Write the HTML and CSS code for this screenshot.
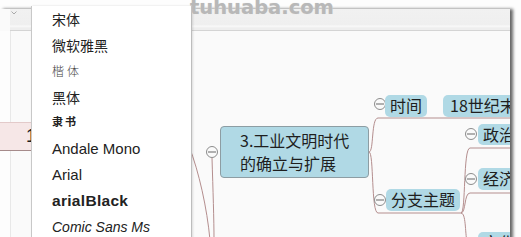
FILE: index.html
```html
<!DOCTYPE html>
<html lang="zh">
<head>
<meta charset="utf-8">
<title>字体菜单</title>
<link rel="stylesheet" href="styles.css">
</head>
<body>
<div class="screen">
  <div class="window">
    <div class="toolbar">
      <svg class="chev" width="6" height="4" viewBox="0 0 6 4"><path d="M0.5 0.5 L3 3 L5.5 0.5" fill="none" stroke="#aaa" stroke-width="1"/></svg>
    </div>
    <div class="canvas">
      <div class="gutter"></div>
      <svg class="links" width="510" height="206" viewBox="0 31 510 206">
        <g fill="none" stroke="#b48e8e" stroke-width="1">
          <path d="M189 146 C 199 172 207 208 210 240"/>
          <path d="M212 158 C 213 190 214 220 214 240"/>
          <path d="M369 152 C 374 152 371 118 378 118 L 510 118"/>
          <path d="M369 152 C 374 152 371 213 378 213 L 462 213"/>
          <path d="M461 213 C 466 213 463 148 470 148 L 510 148"/>
          <path d="M461 213 C 466 213 464 193 470 193 L 510 193"/>
          <path d="M461 213 C 466 213 465 232 467 242"/>
        </g>
        <g fill="#fafafa" stroke="#8c8c8c" stroke-width="1">
          <circle cx="212" cy="152" r="5.5"/>
          <circle cx="380" cy="104" r="5.5"/>
          <circle cx="380" cy="200" r="5.5"/>
          <circle cx="471" cy="134" r="5.5"/>
          <circle cx="471" cy="179" r="5.5"/>
        </g>
        <g stroke="#666" stroke-width="1">
          <path d="M208 152 H216"/>
          <path d="M376 104 H384"/>
          <path d="M376 200 H384"/>
          <path d="M467 134 H475"/>
          <path d="M467 179 H475"/>
        </g>
      </svg>
      <div class="node pink">1</div>
      <div class="node central">3.工业文明时代<br>的确立与扩展</div>
      <div class="node tag t-time">时间</div>
      <div class="node tag t-era">18世纪末</div>
      <div class="node tag t-branch">分支主题</div>
      <div class="node tag t-pol">政治</div>
      <div class="node tag t-eco">经济</div>
      <div class="node tag t-last">文化</div>
    </div>
  </div>
  <div class="watermark">tuhuaba.com</div>
  <ul class="font-menu">
    <li class="f-song">宋体</li>
    <li class="f-yahei">微软雅黑</li>
    <li class="f-kai">楷体</li>
    <li class="f-hei">黑体</li>
    <li class="f-li">隶书</li>
    <li class="f-latin">Andale Mono</li>
    <li class="f-latin">Arial</li>
    <li class="f-black">arialBlack</li>
    <li class="f-comic">Comic Sans Ms</li>
  </ul>
</div>
</body>
</html>
```

FILE: styles.css
```css
html, body {
  margin: 0;
  padding: 0;
  background: #ffffff;
}

.screen {
  position: relative;
  width: 521px;
  height: 237px;
  overflow: hidden;
  padding-top: 9px;
  box-sizing: border-box;
  background: #fdfdfd;
  font-family: "Noto Sans CJK SC", "Liberation Sans", sans-serif;
}

.window {
  width: 510px;
  height: 240px;
  background: #fafafa;
  box-shadow: 3px 0 3px rgba(0, 0, 0, 0.6);
}

.toolbar {
  height: 21px;
  margin-left: 10px;
  background: linear-gradient(#f1f1f1 0, #efefef 16px, #fafafa 17px, #eeeeee 19px);
  border-bottom: 1px solid #d4d4d4;
  position: relative;
}

.chev {
  position: absolute;
  left: 1px;
  top: 2px;
}

.canvas {
  position: relative;
  height: 206px;
  overflow: hidden;
}

.gutter {
  width: 10px;
  height: 100%;
  border-right: 1px solid #e8e8e8;
  background: #fdfdfd;
}

.links {
  position: absolute;
  left: 0;
  top: 0;
}

.node {
  position: absolute;
  box-sizing: border-box;
  color: #1e1e1e;
  white-space: nowrap;
}

.pink {
  left: 0;
  top: 91px;
  width: 60px;
  height: 29px;
  background: #f6e7e7;
  border-top: 1px solid #e3caca;
  border-bottom: 1px solid #a58a8a;
  padding-left: 26px;
  font-family: "Liberation Sans", sans-serif;
  font-size: 18px;
  line-height: 26px;
}

.central {
  left: 220px;
  top: 95px;
  width: 149px;
  height: 52px;
  background: #b0d9e5;
  border: 1px solid #8d9da3;
  border-radius: 4px;
  padding: 2px 0 0 19px;
  font-size: 16px;
  line-height: 23px;
}

.tag {
  height: 22px;
  background: #b0d9e5;
  border-radius: 5px;
  padding-left: 5px;
  font-size: 16px;
  line-height: 21px;
}

.t-time { left: 385px; top: 64px; width: 42px; }
.t-era { left: 443px; top: 64px; width: 80px; padding-left: 7px; }
.t-branch { left: 386px; top: 158px; width: 74px; }
.t-pol { left: 478px; top: 93px; width: 50px; height: 21px; }
.t-eco { left: 478px; top: 137px; width: 50px; }
.t-last { left: 478px; top: 201px; width: 50px; }

.watermark {
  position: absolute;
  left: 190px;
  top: -4px;
  font-family: "DejaVu Sans", "Liberation Sans", sans-serif;
  font-weight: bold;
  font-size: 19.5px;
  line-height: 24px;
  color: #b8b8b8;
  text-shadow: 0 0 1px #dedede;
  z-index: 3;
}

.font-menu {
  position: absolute;
  left: 31px;
  top: 6px;
  width: 159px;
  height: 240px;
  margin: 0;
  padding: 0;
  list-style: none;
  background: #ffffff;
  border-left: 1px solid #c8c8c8;
  border-right: 1px solid #bdbdbd;
  box-shadow: 1px 0 2px rgba(0, 0, 0, 0.12);
  z-index: 2;
}

.font-menu li {
  height: 26px;
  line-height: 26px;
  padding-left: 20px;
  color: #222;
  font-size: 14px;
  white-space: nowrap;
}

.f-song { font-family: "Noto Sans CJK SC", sans-serif; }
.f-yahei { font-family: "Noto Sans CJK SC", sans-serif; }
.font-menu .f-kai {
  font-size: 12px;
  letter-spacing: 3px;
  color: #444;
  font-weight: 300;
}
.f-hei { font-family: "Noto Sans CJK SC", sans-serif; }
.font-menu .f-li {
  font-size: 11px;
  font-weight: bold;
  letter-spacing: 2px;
  line-height: 22px;
}
.font-menu .f-latin {
  font-family: "Liberation Sans", sans-serif;
  font-size: 15px;
}
.font-menu .f-black {
  font-family: "Liberation Sans", sans-serif;
  font-weight: bold;
  font-size: 15.5px;
  letter-spacing: 0.3px;
}
.font-menu .f-comic {
  font-family: "Liberation Sans", sans-serif;
  font-style: italic;
  font-size: 14px;
}
```
